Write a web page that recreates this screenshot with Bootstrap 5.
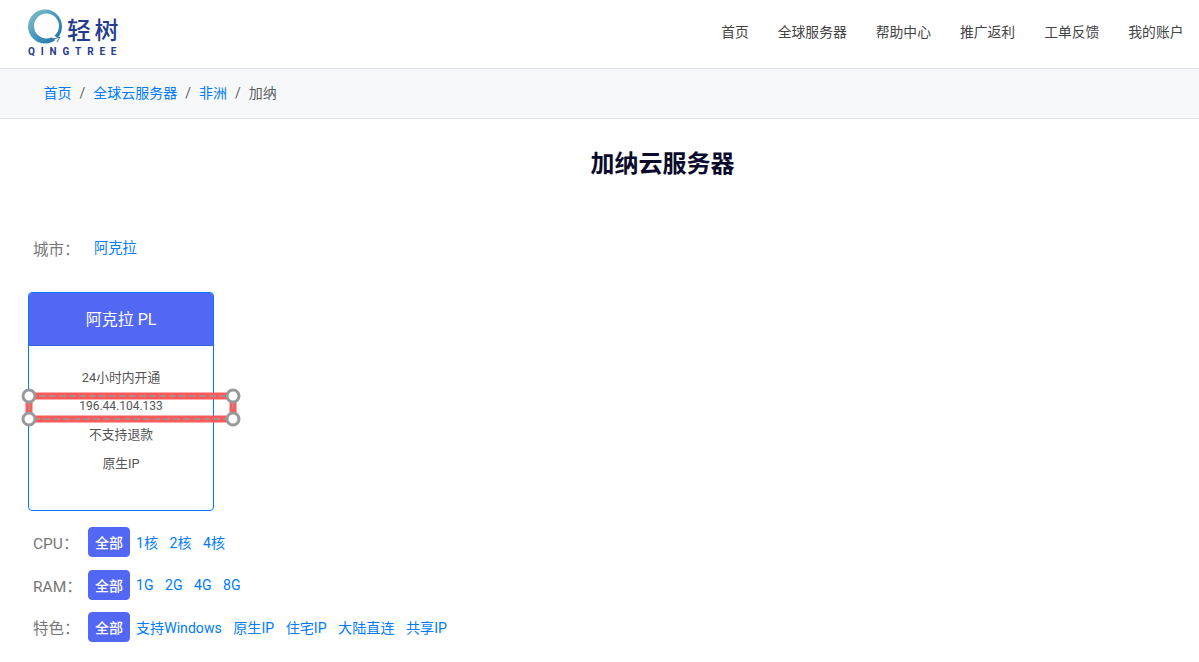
<!DOCTYPE html>
<html lang="zh-CN">
<head>
<meta charset="utf-8">
<title>加纳云服务器</title>
<link href="https://cdn.jsdelivr.net/npm/bootstrap@5.3.0/dist/css/bootstrap.min.css" rel="stylesheet">
<style>
body{font-family:Roboto,"Noto Sans CJK SC",sans-serif;font-size:14px;color:#444;background:#fff;overflow:hidden}
a{text-decoration:none}
.top-bar{height:69px;border-bottom:1px solid #dee2e6;padding:0 15.5px 0 28px}
.logo-wrap{width:94px;height:50px;margin-top:9px;color:#253b8e;position:relative;flex:none}
.logo-ring{position:absolute;left:0;top:0}
.logo-cn{position:absolute;left:39px;top:5px;font-size:24px;line-height:34px;letter-spacing:3.5px;font-weight:500;white-space:nowrap}
.logo-en{position:absolute;left:0;top:36.5px;font-size:10px;line-height:12px;letter-spacing:5.85px;font-weight:700;white-space:nowrap}
.top-links{gap:29px;height:64px;padding-left:1px}
.top-links a{color:#444;line-height:20px;font-size:13.8px}
.crumb-bar{height:50px;background:#f7f8fa;border-bottom:1px solid #dee2e6;padding-left:43.5px}
.crumb-bar .breadcrumb{font-size:14px;--bs-breadcrumb-margin-bottom:0;--bs-breadcrumb-item-padding-x:8px}
.crumb-bar a{color:#007bff}
.page-title{font-size:24px;line-height:30px;font-weight:700;color:#0b0b2b;text-align:center;margin:30px 0 0 126px}
.main-pane{padding-left:28px}
.city-row{margin-top:55px;height:30px;padding-left:5px}
.row-label{color:#777;font-size:15.5px;width:61px;flex:none;line-height:30px;padding-top:2px}
.main-pane a.opt{color:#007bff}
.city-row a.opt{font-size:14.3px}
.plan-box{width:186px;height:219px;margin-top:28px;border:1px solid #007bff;border-radius:4px;overflow:visible;position:relative;--bs-card-bg:#fff}
.plan-head{height:53px;background:#5367f5;color:#fff;font-size:16px;border-radius:3px 3px 0 0;border-bottom:1px solid #3f63e6;padding-top:1px}
.plan-body{padding:17.5px 0 0;text-align:center;font-size:12.8px;line-height:28.7px;color:#555}
.ip-line{font-size:12px}
.select-mark{position:absolute;left:-8px;top:94.5px;width:222px;height:40px}
.filter-row{height:30px;padding-left:5px;margin-top:12.5px}
.filter-row.first-row{margin-top:16px}
.filter-opts{gap:11.5px}
.filter-opts a.opt{padding-top:3px;font-size:14.1px}
.filter-on{background:#5367f5;border-color:#5367f5;color:#fff;font-size:14px;font-weight:500;line-height:20px;padding:5px 6px 3px;border-radius:4px;margin-right:-5.5px}
.filter-on:hover{background:#5367f5;color:#fff}
.row-label-tight{width:55px;padding-top:4px}
</style>
</head>
<body>
<header class="top-bar d-flex justify-content-between align-items-start">
  <a class="logo-wrap d-block" href="#">
    <svg class="logo-ring" width="38" height="38" viewBox="0 0 38 38" aria-hidden="true">
      <defs><linearGradient id="ringGrad" x1="0" y1="0" x2="1" y2="1"><stop offset="0" stop-color="#8cc6c9"/><stop offset=".45" stop-color="#4b9dbf"/><stop offset="1" stop-color="#1b6aa0"/></linearGradient></defs>
      <path fill-rule="evenodd" fill="url(#ringGrad)" d="M17 .5a17 17 0 1 1 0 34a17 17 0 1 1 0-34ZM18.5 4.5a12.5 12.5 0 1 0 0 25a12.5 12.5 0 1 0 0-25Z"/>
      <path d="M23 26l10 7" stroke="#fff" stroke-width="3" fill="none"/>
      <path d="M25 30l7-2M29 33l3-5" stroke="#3a7fb0" stroke-width="1.1" fill="none"/>
    </svg>
    <span class="logo-cn">轻树</span>
    <span class="logo-en">QINGTREE</span>
  </a>
  <nav class="top-links d-flex align-items-center">
    <a href="#">首页</a><a href="#">全球服务器</a><a href="#">帮助中心</a><a href="#">推广返利</a><a href="#">工单反馈</a><a href="#">我的账户</a>
  </nav>
</header>
<div class="crumb-bar d-flex align-items-center">
  <ol class="breadcrumb">
    <li class="breadcrumb-item"><a href="#">首页</a></li>
    <li class="breadcrumb-item"><a href="#">全球云服务器</a></li>
    <li class="breadcrumb-item"><a href="#">非洲</a></li>
    <li class="breadcrumb-item active">加纳</li>
  </ol>
</div>
<h1 class="page-title">加纳云服务器</h1>
<main class="main-pane">
  <div class="city-row d-flex align-items-center">
    <span class="row-label">城市：</span>
    <a class="opt" href="#">阿克拉</a>
  </div>
  <div class="plan-box card">
    <div class="plan-head d-flex align-items-center justify-content-center">阿克拉 PL</div>
    <div class="plan-body">
      <div>24小时内开通</div>
      <div class="ip-line">196.44.104.133</div>
      <div>不支持退款</div>
      <div>原生IP</div>
    </div>
    <svg class="select-mark" viewBox="0 0 222 40" aria-hidden="true">
      <rect x="8" y="8" width="204" height="23" fill="none" stroke="#ff5a5a" stroke-width="7"/>
      <rect x="8" y="8" width="204" height="23" fill="none" stroke="#999" stroke-width="1.5" stroke-dasharray="7 3"/>
      <g fill="#fff" stroke="#999" stroke-width="3">
        <circle cx="8" cy="8" r="6"/><circle cx="212" cy="8" r="6"/>
        <circle cx="8" cy="31" r="6"/><circle cx="212" cy="31" r="6"/>
      </g>
    </svg>
  </div>
  <div class="filter-row first-row d-flex align-items-center">
    <span class="row-label row-label-tight">CPU：</span>
    <div class="filter-opts d-flex align-items-center">
      <a class="btn filter-on" href="#">全部</a><a class="opt" href="#">1核</a><a class="opt" href="#">2核</a><a class="opt" href="#">4核</a>
    </div>
  </div>
  <div class="filter-row d-flex align-items-center">
    <span class="row-label row-label-tight">RAM：</span>
    <div class="filter-opts d-flex align-items-center">
      <a class="btn filter-on" href="#">全部</a><a class="opt" href="#">1G</a><a class="opt" href="#">2G</a><a class="opt" href="#">4G</a><a class="opt" href="#">8G</a>
    </div>
  </div>
  <div class="filter-row d-flex align-items-center">
    <span class="row-label row-label-tight">特色：</span>
    <div class="filter-opts d-flex align-items-center">
      <a class="btn filter-on" href="#">全部</a><a class="opt" href="#">支持Windows</a><a class="opt" href="#">原生IP</a><a class="opt" href="#">住宅IP</a><a class="opt" href="#">大陆直连</a><a class="opt" href="#">共享IP</a>
    </div>
  </div>
</main>
<script src="https://cdn.jsdelivr.net/npm/bootstrap@5.3.0/dist/js/bootstrap.bundle.min.js"></script>
</body>
</html>
